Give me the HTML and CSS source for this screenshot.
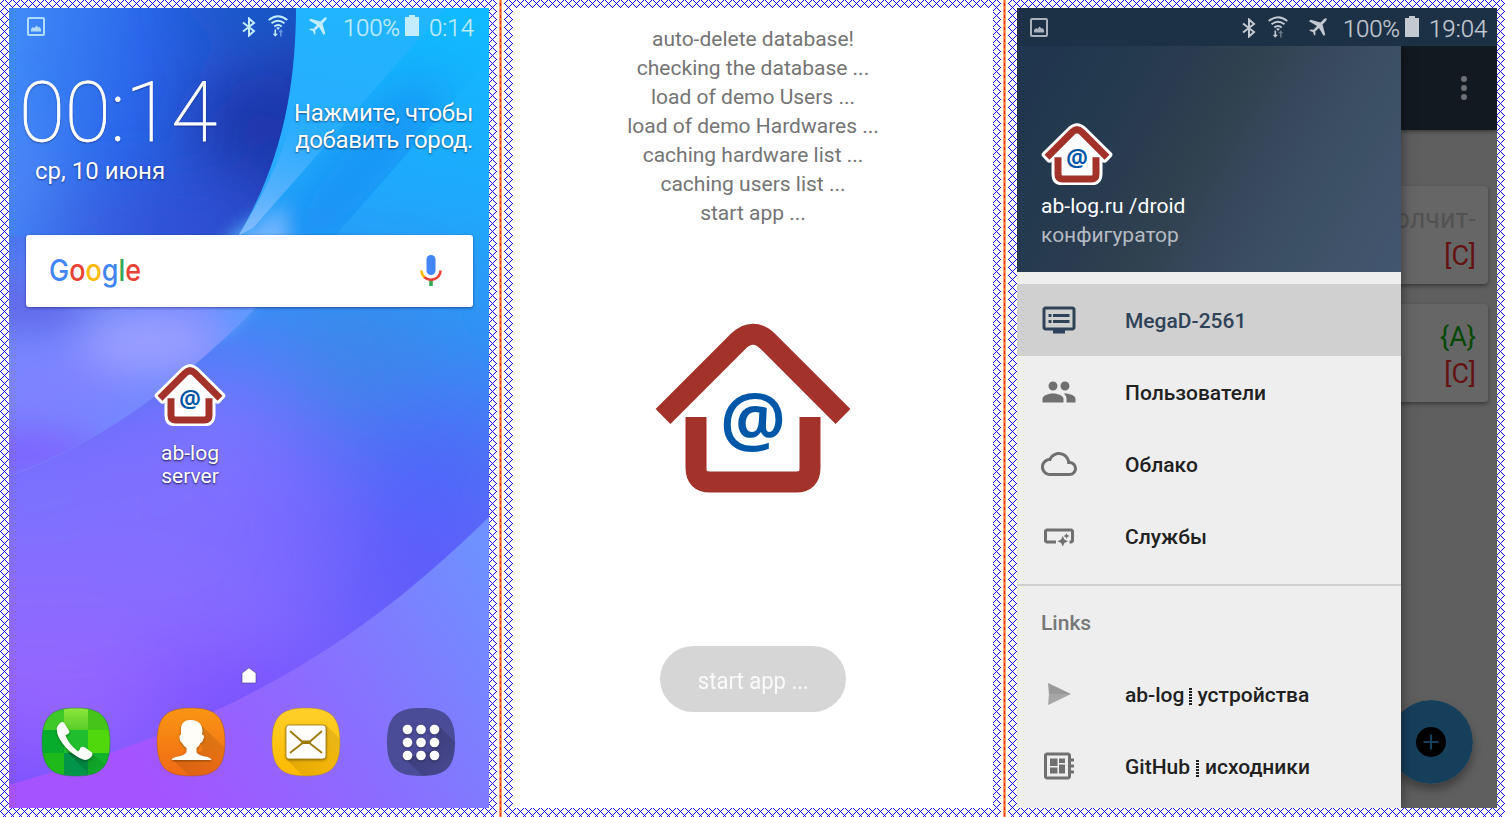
FILE: index.html
```html
<!DOCTYPE html>
<html lang="ru">
<head>
<meta charset="utf-8">
<title>ab-log server</title>
<link rel="stylesheet" href="styles.css">
</head>
<body>
<svg class="defs" aria-hidden="true">
  <defs>
    <pattern id="hatch" width="8" height="8" patternUnits="userSpaceOnUse">
      <path fill="#1400ff" shape-rendering="crispEdges" d="M0 3h1v1H0zM1 2h1v1H1zM1 4h1v1H1zM2 1h1v1H2zM2 5h1v1H2zM3 0h1v1H3zM3 6h1v1H3zM4 7h1v1H4zM5 0h1v1H5zM5 6h1v1H5zM6 1h1v1H6zM6 5h1v1H6zM7 2h1v1H7zM7 4h1v1H7z"/>
    </pattern>
    <g id="house-shape" fill="none">
      <path d="M663 416.5 738 341.5Q753 327 768 341.5L843 416.5"/>
      <path d="M696 417V468Q696 482 710 482H796Q810 482 810 468V417"/>
    </g>
    <symbol id="house" viewBox="645 314 216 186">
      <use href="#house-shape" stroke="#a3322b" stroke-width="21"/>
      <text class="at" x="753" y="446" text-anchor="middle" textLength="66" lengthAdjust="spacingAndGlyphs">@</text>
    </symbol>
    <symbol id="house-outlined" viewBox="645 314 216 186">
      <path d="M656 409 733 333Q753 315 773 333L850 409 836 424 820.500 411V468Q820 492 796 492H710Q686 492 685.500 468V411L670 424Z" fill="#fff" stroke="#fff" stroke-width="18" stroke-linejoin="round"/>
      <use href="#house-shape" stroke="#a3322b" stroke-width="21"/>
      <text class="at" x="753" y="446" text-anchor="middle" textLength="66" lengthAdjust="spacingAndGlyphs">@</text>
    </symbol>
    <symbol id="picture" viewBox="0 0 18 19">
      <rect x="1" y="1" width="16" height="17" rx="1" fill="none" stroke="currentColor" stroke-width="2"/>
      <path d="M4 14.500V12l2-2 1.500 1 2-2.500 2 2 1-.5 1.500 2v2.500z" fill="currentColor"/>
    </symbol>
    <symbol id="bluetooth" viewBox="0 0 14 20">
      <path d="M1 5.500 12 14 7 18.500V1.500L12 6 1 14.500" fill="none" stroke="currentColor" stroke-width="2"/>
    </symbol>
    <symbol id="wifi" viewBox="0 0 20 22">
      <g fill="none" stroke="currentColor" stroke-width="1.900">
        <path d="M.7 5Q10-2.500 19.300 5"/><path d="M3.500 8.300Q10 3 16.500 8.300"/><path d="M6.300 11.500Q10 8.500 13.700 11.500"/>
      </g>
      <path d="M8 12.800Q10 11.600 12 12.800L10 15z" fill="currentColor"/>
      <path class="wifi-down" d="M6.500 14.500h1.600v4.300H10l-2.700 3-2.600-3h1.800z" fill="currentColor"/>
      <path d="M12 21.500h1.600v-4.300h1.800l-2.600-3-2.700 3H12z" fill="currentColor" opacity=".45"/>
    </symbol>
    <symbol id="plane" viewBox="0 0 18 18">
      <path d="M17.700.3Q16 0 14.800 1.300L11.500 4.500 1.500 1.800 0 3.300 8 8 4.500 11.800 1.500 11.500.3 12.700 4 14 5.300 17.700 6.500 16.500 6.200 13.500 10 10 14.700 18 16.200 16.500 13.500 6.500 16.700 3.200Q18 2 17.700.3z" fill="currentColor"/>
    </symbol>
    <symbol id="battery" viewBox="0 0 14 21">
      <path d="M4 0h6v2h4v19H0V2h4z" fill="currentColor"/>
    </symbol>
  </defs>
</svg>

<main class="sheet">
  <section class="frame">
    <svg class="hatch" aria-hidden="true"><rect width="497" height="817" fill="url(#hatch)"/></svg>
    <div class="screen home">
      <svg class="wallpaper" viewBox="9 8 480 800" preserveAspectRatio="none" aria-hidden="true">
        <defs>
          <linearGradient id="cyan" gradientUnits="userSpaceOnUse" x1="460" y1="8" x2="300" y2="808">
            <stop offset="0" stop-color="#10baff"/><stop offset=".24" stop-color="#1fa8fc"/><stop offset=".4" stop-color="#348ef4"/><stop offset=".54" stop-color="#4f74f4"/><stop offset=".66" stop-color="#6464fc"/><stop offset="1" stop-color="#7a50ff"/>
          </linearGradient>
          <linearGradient id="navy" gradientUnits="userSpaceOnUse" x1="9" y1="60" x2="290" y2="110">
            <stop offset="0" stop-color="#408af8"/><stop offset=".45" stop-color="#2a66ea"/><stop offset="1" stop-color="#2040b8"/>
          </linearGradient>
          <linearGradient id="floor" gradientUnits="userSpaceOnUse" x1="489" y1="570" x2="150" y2="790">
            <stop offset="0" stop-color="#6f90ff"/><stop offset=".5" stop-color="#8a6eff"/><stop offset="1" stop-color="#a553ff"/>
          </linearGradient>
          <linearGradient id="beam" gradientUnits="userSpaceOnUse" x1="300" y1="120" x2="250" y2="240">
            <stop offset="0" stop-color="#58b4ff" stop-opacity="0"/><stop offset="1" stop-color="#84bcff"/>
          </linearGradient>
          <filter id="b20" x="-100%" y="-100%" width="300%" height="300%"><feGaussianBlur stdDeviation="20"/></filter>
          <filter id="b30" x="-100%" y="-100%" width="300%" height="300%"><feGaussianBlur stdDeviation="32"/></filter>
          <filter id="b40" x="-100%" y="-100%" width="300%" height="300%"><feGaussianBlur stdDeviation="44"/></filter>
          <filter id="b8" x="-100%" y="-100%" width="300%" height="300%"><feGaussianBlur stdDeviation="9"/></filter>
          <clipPath id="arc"><path d="M9 8H296C296 80 284 160 238 236H9Z"/></clipPath>
          <clipPath id="band"><path d="M446 8 253 228V236H335L489 60V8Z"/></clipPath>
          <clipPath id="swoop"><path d="M9 236H330L253 310C195 370 110 440 9 476Z"/></clipPath>
        </defs>
        <rect x="9" y="8" width="480" height="800" fill="url(#cyan)"/>
        <g filter="url(#b40)">
          <ellipse cx="90" cy="590" rx="230" ry="170" fill="#8a6cff"/>
          <ellipse cx="190" cy="480" rx="130" ry="90" fill="#7f70ff"/>
          <ellipse cx="20" cy="500" rx="60" ry="30" fill="#6a78ff"/>
          <ellipse cx="60" cy="700" rx="140" ry="50" fill="#9864ff"/>
          <ellipse cx="225" cy="690" rx="90" ry="30" fill="#7a44ff"/>
          <ellipse cx="290" cy="550" rx="60" ry="60" fill="#7868ff"/>
          <ellipse cx="410" cy="565" rx="55" ry="45" fill="#5a58f8"/>
          <ellipse cx="430" cy="470" rx="60" ry="40" fill="#4c64fc"/>
          <ellipse cx="360" cy="350" rx="50" ry="42" fill="#4085e2"/>
          <ellipse cx="230" cy="385" rx="50" ry="35" fill="#6a80ff"/>
        </g>
        <path d="M296 8H446L253 228 238 236C284 160 296 80 296 8Z" fill="#3fb0ff" opacity=".35"/>
        <path d="M296 100 345 124 253 228 238 236C270 184 288 145 296 100Z" fill="url(#beam)"/>
        <g clip-path="url(#band)">
          <ellipse cx="365" cy="165" rx="110" ry="36" transform="rotate(-48 365 165)" fill="#168cf2" opacity=".65" filter="url(#b20)"/>
        </g>
        <path d="M285 205 290 240 230 330 205 330 240 236Z" fill="#84bcff" opacity=".8" filter="url(#b8)"/>
        <g clip-path="url(#swoop)">
          <path d="M9 236H330L253 310C195 370 110 440 9 476Z" fill="#7488ff"/>
          <g filter="url(#b20)">
            <ellipse cx="25" cy="306" rx="80" ry="22" fill="#5d64e6"/>
            <ellipse cx="0" cy="225" rx="70" ry="50" fill="#4876f0"/>
            <ellipse cx="150" cy="342" rx="70" ry="30" fill="#9ba0ff"/>
            <ellipse cx="50" cy="385" rx="80" ry="30" fill="#7f82ff"/>
            <ellipse cx="15" cy="455" rx="90" ry="26" fill="#8060ff"/>
            <ellipse cx="250" cy="300" rx="30" ry="50" fill="#5a9cff"/>
            <ellipse cx="110" cy="303" rx="30" ry="6" fill="#4b85f0"/>
          </g>
        </g>
        <g clip-path="url(#arc)">
          <path d="M9 8H296C296 80 284 160 238 236H9Z" fill="url(#navy)"/>
          <g filter="url(#b30)">
            <ellipse cx="265" cy="125" rx="65" ry="50" fill="#1f36aa"/>
            <ellipse cx="270" cy="0" rx="80" ry="34" fill="#165dc8"/>
            <ellipse cx="170" cy="225" rx="110" ry="36" fill="#3050d6"/>
            <ellipse cx="0" cy="180" rx="40" ry="60" fill="#4f86f8"/>
            <ellipse cx="85" cy="220" rx="50" ry="25" fill="#4262df"/>
          </g>
          <ellipse cx="248" cy="236" rx="38" ry="9" transform="rotate(-38 248 236)" fill="#5cc0ff" filter="url(#b8)"/>
        </g>
        <path d="M253 310C195 370 110 440 9 476" fill="none" stroke="#7ea0ff" stroke-opacity=".3"/>
        <path d="M489 517C340 663 210 727 9 785V808H489Z" fill="url(#floor)"/>
      </svg>

      <div class="status">
        <svg class="s-pic"><use href="#picture"/></svg>
        <svg class="s-bt"><use href="#bluetooth"/></svg>
        <svg class="s-wifi"><use href="#wifi"/></svg>
        <svg class="s-plane"><use href="#plane"/></svg>
        <span class="s-pct">100%</span>
        <svg class="s-bat"><use href="#battery"/></svg>
        <span class="s-time">0:14</span>
      </div>

      <div class="weather">
        <div class="clock">
          <div class="clock-time">00:14</div>
          <div class="clock-date">ср, 10 июня</div>
        </div>
        <div class="city">Нажмите, чтобы<br>добавить город.</div>
      </div>

      <div class="search">
        <svg class="google" viewBox="0 0 92 36"><text x="-1" y="28" textLength="92" lengthAdjust="spacingAndGlyphs"><tspan fill="#4285f4">G</tspan><tspan fill="#ea4335">o</tspan><tspan fill="#fbbc05">o</tspan><tspan fill="#4285f4">g</tspan><tspan fill="#34a853">l</tspan><tspan fill="#ea4335">e</tspan></text></svg>
        <svg class="mic" viewBox="0 0 22 31">
          <rect x="6.500" y="0" width="9" height="20" rx="4.500" fill="#4285f4"/>
          <path d="M11 24.500V31" stroke="#34a853" stroke-width="3.600"/>
          <path d="M1.400 15.500Q1.800 20 4.600 22.400" stroke="#fbbc05" stroke-width="2.600" fill="none"/>
          <path d="M4.300 22.200C8.500 26.500 20 25.500 20.600 15.500" stroke="#ea4335" stroke-width="2.600" fill="none"/>
        </svg>
      </div>

      <div class="shortcut">
        <svg class="house-small"><use href="#house-outlined"/></svg>
        <div class="shortcut-name">ab-log<br>server</div>
      </div>

      <svg class="page-mark" viewBox="0 0 16 17"><path d="M1 6 8 .8 15 6V16H1z" fill="#fff" stroke="#4a3a90" stroke-opacity=".8" stroke-width=".8"/></svg>

      <nav class="dock">
        <svg viewBox="0 0 70 70">
          <defs>
            <clipPath id="sq"><path d="M35 1C58 1 69 8 69 35S58 69 35 69 1 62 1 35 12 1 35 1Z"/></clipPath>
            <linearGradient id="ph1" x2="0" y2="1"><stop stop-color="#8fe83c"/><stop offset="1" stop-color="#58cc2a"/></linearGradient>
            <linearGradient id="or" x2="0" y2="1"><stop stop-color="#fa9614"/><stop offset="1" stop-color="#f06914"/></linearGradient>
            <linearGradient id="ye" x2="0" y2="1"><stop stop-color="#ffd02a"/><stop offset="1" stop-color="#fdb900"/></linearGradient>
            <linearGradient id="shade" x2="1" y2="1"><stop stop-color="#000" stop-opacity=".3"/><stop offset="1" stop-color="#000" stop-opacity=".03"/></linearGradient>
          </defs>
          <g clip-path="url(#sq)">
            <path fill="#3fc928" d="M0 0h23v23H0z"/><path fill="url(#ph1)" d="M23 0h24v23H23z"/><path fill="#45c41a" d="M47 0h23v23H47z"/>
            <path fill="#08ac2c" d="M0 23h23v23H0z"/><path fill="#20bd2e" d="M23 23h24v23H23z"/><path fill="#50d80c" d="M47 23h23v23H47z"/>
            <path fill="#20b91c" d="M0 46h23v24H0z"/><path fill="#009548" d="M23 46h24v24H23z"/><path fill="#12b42c" d="M47 46h23v24H47z"/>
            <path d="M50 46 68 60 56 70 47 66 25 44 40 50Z" fill="url(#shade)" opacity=".7"/>
          </g>
          <path d="M35 1C58 1 69 8 69 35S58 69 35 69 1 62 1 35 12 1 35 1Z" fill="none" stroke="#1d7a35" stroke-opacity=".5"/>
          <path class="lift" d="M16 20Q20 13.500 23 15.500L28.500 24.500Q28 27.500 24.500 28Q26.500 36 37 44.500Q39.500 42 39.500 40.500Q42 39 44 40.500L51 45.500Q53 49 46.500 52.500Q43 54 36 49.500C24 42 14 29 16 20Z" fill="#fcfffa"/>
        </svg>
        <svg viewBox="0 0 70 70">
          <g clip-path="url(#sq)"><path fill="url(#or)" d="M0 0h70v70H0z"/><path d="M45 18 70 42V70H35L17 53 46 44Z" fill="url(#shade)" opacity=".6"/></g>
          <path d="M35 1C58 1 69 8 69 35S58 69 35 69 1 62 1 35 12 1 35 1Z" fill="none" stroke="#a0502a" stroke-opacity=".5"/>
          <path class="lift" d="M35 13C43 13 46.500 18 46.500 24L46 27.500Q49 28 47.500 32Q46 36 44.500 36Q43.500 39 40.500 41V45Q42 48 49 49.500Q55 50.500 55.500 53H15.500Q16 50.500 22 49.500Q29 48 30.500 45V41Q27.500 39 26 36Q24 35 23.500 31Q23 28 25 27.500V22C25 16 29 12.500 35 13Z" fill="#fffdf8"/>
        </svg>
        <svg viewBox="0 0 70 70">
          <g clip-path="url(#sq)"><path fill="url(#ye)" d="M0 0h70v70H0z"/><path d="M55 18 70 33V70H33L15 52Z" fill="url(#shade)" opacity=".55"/></g>
          <path d="M35 1C58 1 69 8 69 35S58 69 35 69 1 62 1 35 12 1 35 1Z" fill="none" stroke="#a88430" stroke-opacity=".5"/>
          <rect class="lift" x="15" y="18" width="40" height="34" rx="3" fill="#fffefa" stroke="#9d7a10" stroke-width=".8"/>
          <path d="M19.500 24.500 31 34.500H39L50.500 24.500M19.500 45.500 31 36.500V34.500M50.500 45.500 39 36.500V34.500M31 36H39" fill="none" stroke="#9d780b" stroke-width="1.800" stroke-linecap="round"/>
        </svg>
        <svg viewBox="0 0 70 70">
          <g clip-path="url(#sq)"><path fill="#4b4c98" d="M0 0h70v70H0z"/><path d="M54 20 70 36V70H38L18 51 45 44Z" fill="url(#shade)" opacity=".9"/></g>
          <g class="lift" fill="#fff"><circle cx="21.500" cy="22.500" r="4.800"/><circle cx="35" cy="22.500" r="4.800"/><circle cx="48.500" cy="22.500" r="4.800"/><circle cx="21.500" cy="35.500" r="4.800"/><circle cx="35" cy="35.500" r="4.800"/><circle cx="48.500" cy="35.500" r="4.800"/><circle cx="21.500" cy="48.500" r="4.800"/><circle cx="35" cy="48.500" r="4.800"/><circle cx="48.500" cy="48.500" r="4.800"/></g>
        </svg>
      </nav>
    </div>
  </section>

  <div class="seam"></div>

  <section class="frame">
    <svg class="hatch" aria-hidden="true"><rect width="497" height="817" fill="url(#hatch)"/></svg>
    <div class="screen splash">
      <div class="log">auto-delete database!<br>checking the database ...<br>load of demo Users ...<br>load of demo Hardwares ...<br>caching hardware list ...<br>caching users list ...<br>start app ...</div>
      <svg class="house-big"><use href="#house"/></svg>
      <div class="start"><span>start app ...</span></div>
    </div>
  </section>

  <div class="seam"></div>

  <section class="frame">
    <svg class="hatch" aria-hidden="true"><rect width="497" height="817" fill="url(#hatch)"/></svg>
    <div class="screen app">
      <div class="status status-app">
        <svg class="s-pic"><use href="#picture"/></svg>
        <svg class="s-bt"><use href="#bluetooth"/></svg>
        <svg class="s-wifi"><use href="#wifi"/></svg>
        <svg class="s-plane"><use href="#plane"/></svg>
        <span class="s-pct">100%</span>
        <svg class="s-bat"><use href="#battery"/></svg>
        <span class="s-time">19:04</span>
      </div>
      <div class="panes">
        <aside class="drawer">
          <header class="drawer-head">
            <svg class="house-small"><use href="#house-outlined"/></svg>
            <div class="drawer-title">ab-log.ru /droid</div>
            <div class="drawer-sub">конфигуратор</div>
          </header>
          <ul class="menu">
            <li class="item item-active"><svg viewBox="0 0 24 24"><path d="M21 3H3c-1.100 0-2 .9-2 2v12c0 1.100.9 2 2 2h5v2h8v-2h5c1.100 0 1.990-.9 1.990-2L23 5c0-1.100-.9-2-2-2zm0 14H3V5h18v12zm-2-9H8v2h11V8zm0 4H8v2h11v-2zM7 8H5v2h2V8zm0 4H5v2h2v-2z"/></svg>MegaD-2561</li>
            <li class="item"><svg viewBox="0 0 24 24"><path d="M16 11c1.660 0 2.990-1.340 2.990-3S17.660 5 16 5c-1.660 0-3 1.340-3 3s1.340 3 3 3zm-8 0c1.660 0 2.990-1.340 2.990-3S9.660 5 8 5C6.340 5 5 6.340 5 8s1.340 3 3 3zm0 2c-2.330 0-7 1.170-7 3.500V19h14v-2.500c0-2.330-4.670-3.500-7-3.500zm8 0c-.29 0-.62.020-.97.050 1.160.84 1.970 1.970 1.970 3.450V19h6v-2.500c0-2.330-4.670-3.500-7-3.500z"/></svg>Пользователи</li>
            <li class="item"><svg viewBox="0 0 24 24"><path d="M19.350 10.040C18.670 6.590 15.640 4 12 4 9.110 4 6.600 5.640 5.350 8.040 2.340 8.360 0 10.910 0 14c0 3.310 2.690 6 6 6h13c2.760 0 5-2.240 5-5 0-2.640-2.050-4.780-4.650-4.960zM19 18H6c-2.210 0-4-1.790-4-4s1.790-4 4-4h.71C7.370 7.690 9.480 6 12 6c3.040 0 5.500 2.460 5.500 5.500v.5H19c1.660 0 3 1.340 3 3s-1.340 3-3 3z"/></svg>Облако</li>
            <li class="item"><svg viewBox="0 0 24 24"><path d="M22 9v6c0 1.100-.9 2-2 2h-1v-2h1V9H4v6h6v2H4c-1.100 0-2-.9-2-2V9c0-1.100.9-2 2-2h16c1.100 0 2 .9 2 2zm-7.500 10 1.090-2.410L18 15.500l-2.410-1.090L14.500 12l-1.090 2.410L11 15.500l2.410 1.090L14.500 19zm2.500-5 .62-1.380L19 12l-1.380-.62L17 10l-.62 1.380L15 12l1.380.62L17 14z"/></svg>Службы</li>
          </ul>
          <div class="menu-label">Links</div>
          <ul class="menu-links">
            <li class="item"><svg class="send" viewBox="0 0 24 24"><path d="M4.700 4.700 20 12H5.300z"/><path d="M5.300 12H20L4.700 19.300z" opacity=".85"/></svg>ab-log<i class="dots"></i>устройства</li>
            <li class="item"><svg viewBox="0 0 24 24"><path d="M22 9V7h-2V5c0-1.100-.9-2-2-2H4c-1.100 0-2 .9-2 2v14c0 1.100.9 2 2 2h14c1.100 0 2-.9 2-2v-2h2v-2h-2v-2h2v-2h-2V9h2zm-4 10H4V5h14v14zM6 13h5v4H6zm6-6h4v3h-4zM6 7h5v5H6zm6 4h4v6h-4z"/></svg>GitHub<i class="dots dots-wide"></i>исходники</li>
          </ul>
        </aside>
        <div class="behind">
          <div class="toolbar"><svg viewBox="0 0 6 24"><circle cx="3" cy="3" r="3"/><circle cx="3" cy="12" r="3"/><circle cx="3" cy="21" r="3"/></svg></div>
          <div class="card"><div class="muted">олчит-</div><div class="red">[C]</div></div>
          <div class="card card-two"><div class="green">{A}</div><div class="red">[C]</div></div>
          <svg class="fab" viewBox="0 0 84 84"><circle cx="42" cy="42" r="42" fill="#163f5c"/><circle cx="42" cy="42" r="15"/><path d="M34.500 42h15M42 34.500v15" stroke="#163f5c" stroke-width="2.200"/></svg>
        </div>
      </div>
    </div>
  </section>
</main>
</body>
</html>
```
FILE: styles.css
```css
* { box-sizing: border-box; }
body { margin: 0; background: #fff; font-family: Roboto, "Noto Sans", sans-serif; overflow: hidden; }
svg { display: block; flex: none; }
.defs { position: absolute; width: 0; height: 0; }
.at { font: 600 74px "Noto Sans", sans-serif; fill: #0057a8; }

.sheet { display: flex; width: 1505px; height: 817px; }
.frame { position: relative; flex: none; width: 497px; padding: 8px 8px 9px 9px; }
.hatch { position: absolute; inset: 0; width: 497px; height: 817px; }
.seam {
  flex: none;
  width: 3px;
  margin: 0 2px;
  background: linear-gradient(90deg, #ff9e7a 1px, transparent 1px 2px, #ff9e7a 2px), repeating-linear-gradient(#ff7a1a 0 3px, #ff2200 3px 6px);
}
.screen { position: relative; width: 480px; height: 800px; overflow: hidden; }

/* status bar */
.status { display: flex; align-items: flex-start; height: 38px; padding-top: 8px; color: #c4ecff; font-size: 24px; font-weight: 300; line-height: 24px; -webkit-text-stroke: .25px currentColor; }
.s-pic { width: 18px; height: 19px; margin: 1px 197px 0 18px; opacity: .85; }
.s-bt { width: 14px; height: 20px; margin: 1px 12px 0 0; }
.s-wifi { width: 20px; height: 22px; margin: -1px 21px 0 0; }
.s-plane { width: 18px; height: 18px; margin: 1px 16px 0 0; }
.s-pct { width: 62px; letter-spacing: -.2px; }
.s-bat { width: 14px; height: 21px; margin: -1px 10px 0 0; }

/* home screen */
.home { display: flex; flex-direction: column; color: #fff; }
.wallpaper { position: absolute; inset: 0; width: 480px; height: 800px; }
.home > :not(.wallpaper) { position: relative; }
.weather { display: flex; justify-content: space-between; height: 189px; padding-right: 16px; text-shadow: 0 1px 2px rgba(0, 0, 40, .55); }
.clock { padding: 26px 0 0 10px; }
.clock-time { font-size: 84px; font-weight: 100; line-height: 82px; letter-spacing: -.2px; -webkit-text-stroke: .8px #fff; }
.clock-date { padding: 0 0 0 16px; font-size: 24px; line-height: 28px; margin-top: 3px; }
.city { padding-top: 54px; font-size: 24px; line-height: 27px; letter-spacing: -.36px; text-align: right; }
.search { display: flex; justify-content: space-between; align-items: center; width: 447px; height: 72px; margin-left: 17px; padding: 0 31px 0 24px; background: #fff; border-radius: 3px; box-shadow: 0 1px 3px rgba(20, 30, 90, .55); }
.google { width: 92px; height: 36px; font: 500 30px Inter, sans-serif; overflow: visible; }
.mic { width: 22px; height: 31px; margin-top: -1px; }
.shortcut { display: flex; flex-direction: column; align-items: center; width: 90px; margin: 57px 0 0 136px; }
.house-small { width: 72px; height: 62px; }
.shortcut-name { margin-top: 16px; font-size: 21px; line-height: 23px; text-align: center; text-shadow: 0 1px 2px rgba(0, 0, 30, .8); }
.page-mark { width: 16px; height: 17px; margin: 179px 0 0 232px; }
.dock { display: flex; justify-content: space-between; padding: 23px 33px 0 32px; }
.dock svg { width: 70px; height: 70px; }
.lift { filter: drop-shadow(0 1px 1px rgba(0, 0, 0, .35)); }

/* splash screen */
.splash { background: #fff; text-align: center; }
.log { padding-top: 17px; font-size: 21px; line-height: 29px; color: #757575; }
.house-big { width: 216px; height: 186px; margin: 86px 0 0 132px; }
.start { display: flex; align-items: center; justify-content: center; width: 186px; height: 66px; margin: 146px 0 0 147px; padding-top: 4px; border-radius: 33px; background: #d6d6d6; color: #fafafa; font-size: 24px; }
.start span { transform: scaleX(.92); }

/* configurator screen */
.app { background: #5f5f5f; }
.status-app { height: 38px; padding-top: 9px; background: #1c3046; color: #c4c9d1; }
.status-app .s-pic { margin-left: 13px; margin-right: 194px; }
.panes { display: flex; height: 762px; overflow: hidden; }
.drawer { z-index: 1; flex: none; width: 384px; background: #eee; box-shadow: 0 0 12px rgba(0, 0, 0, .5); clip-path: inset(0 -20px 0 0); }
.drawer-head { height: 226px; padding: 77px 24px 0; background: linear-gradient(120deg, #1f344e 0%, #233a4e 22%, #2a3b50 34%, #30424f 48%, #38495f 62%, #3c5064 76%, #435670 100%); }
.drawer-title { margin-top: 7px; font-size: 21px; line-height: 29px; color: #fff; letter-spacing: .05px; }
.drawer-sub { font-size: 21px; line-height: 29px; color: #b6bbc2; }
.menu, .menu-links { margin: 0; padding: 0; list-style: none; }
.menu { padding: 12px 0; border-bottom: 2px solid #cfcfcf; }
.item { display: flex; align-items: center; height: 72px; padding: 2px 0 0 24px; color: #212121; font-size: 21px; font-weight: 500; }
.item svg { width: 36px; height: 36px; margin: -2px 48px 0 0; fill: #707070; }
.item .send { fill: #999; }
.item-active { background: #d0d0d0; color: #2f4358; }
.item-active svg { fill: #2f4358; }
.menu-label { height: 72px; padding: 24px 0 0 24px; font-size: 21px; line-height: 26px; font-weight: 500; color: #777; }
.dots { width: 3px; height: 17px; margin: 2px 5px 0 5px; background: repeating-linear-gradient(#212121 0 1.700px, transparent 1.700px 3px); }
.dots-wide { margin: 2px 6px 0; }
.behind { position: relative; width: 96px; overflow: hidden; }
.toolbar { display: flex; justify-content: flex-end; height: 84px; padding: 30px 30px 0 0; background: #121920; box-shadow: 0 1px 4px rgba(0, 0, 0, .5); }
.toolbar svg { width: 6px; height: 24px; fill: #707275; }
.card { display: flex; flex-direction: column; align-items: flex-end; width: 107px; height: 98px; margin: 56px 0 0 -20px; padding: 15px 12px 0 0; border-radius: 4px; background: #666; box-shadow: 0 2px 4px rgba(0, 0, 0, .4); font-size: 27px; line-height: 37px; white-space: nowrap; }
.card-two { margin-top: 20px; }
.muted { color: #525252; }
.red { color: #641212; }
.green { color: #064806; }
.fab { position: absolute; left: -12px; top: 654px; width: 84px; height: 84px; border-radius: 50%; box-shadow: 0 6px 10px rgba(0, 0, 0, .35); }
```
